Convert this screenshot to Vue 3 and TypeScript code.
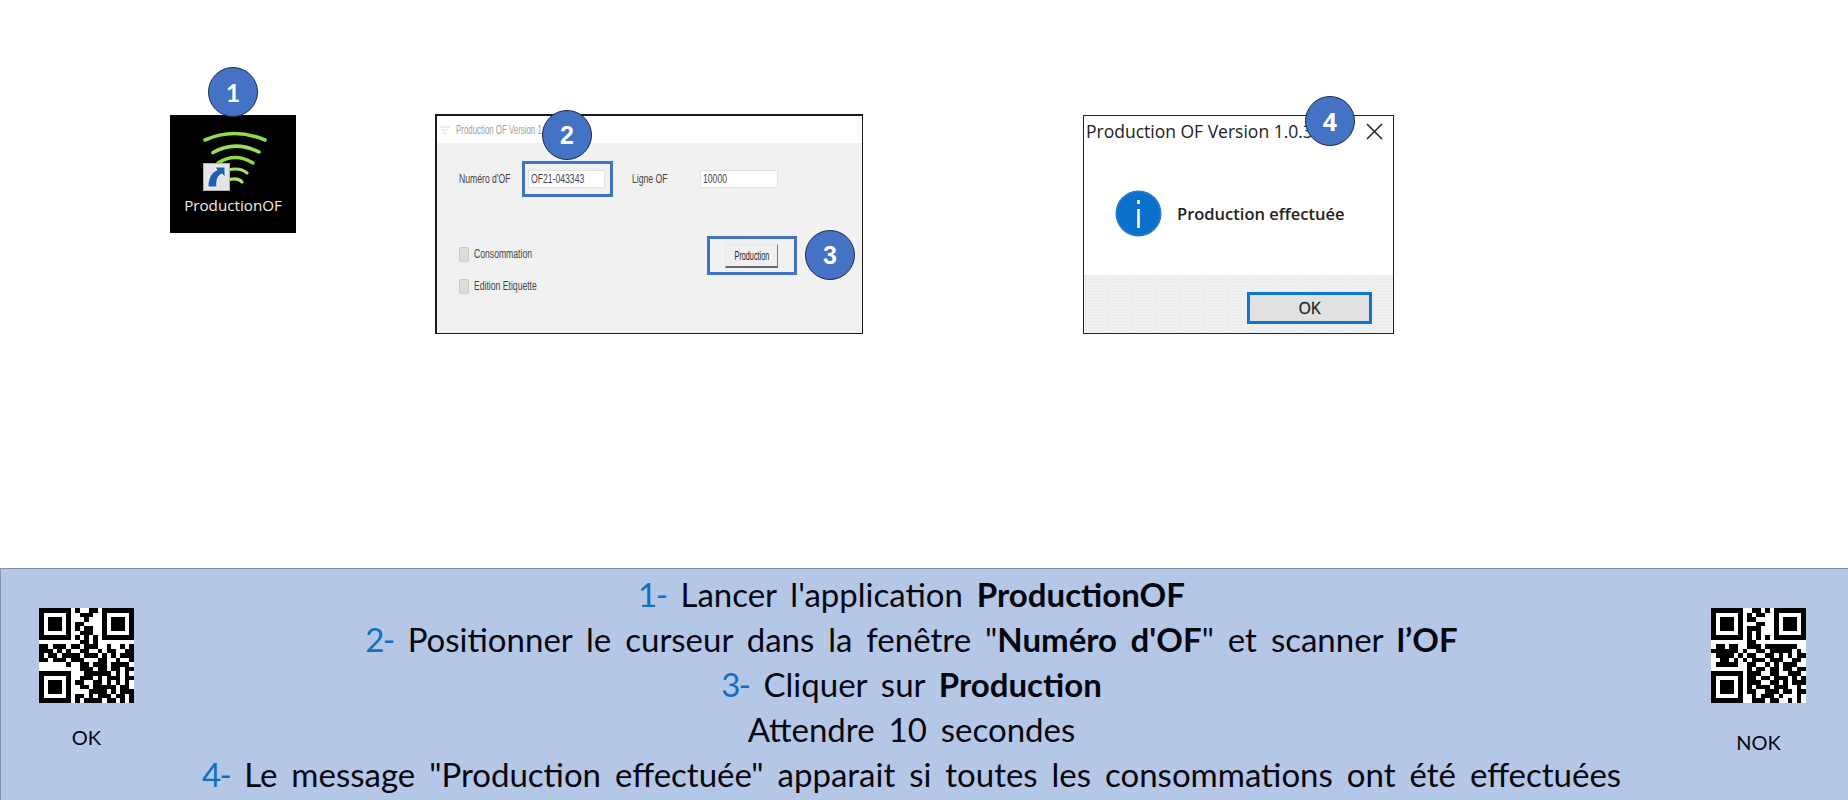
<template>
  <div class="slide">
    <section class="top">
      <div class="shortcut">
        <span class="badge badge-1">1</span>
        <svg class="shortcut-icon" width="126" height="80" viewBox="0 0 126 80" fill="none">
          <path d="M35 25Q64 12 95 25" stroke="#92da4e" stroke-width="3.6" stroke-linecap="round"/>
          <path d="M43 37.5Q65 25 89 37" stroke="#9ade58" stroke-width="3.6" stroke-linecap="round"/>
          <path d="M48 48Q65 37 83 48" stroke="#8ed84a" stroke-width="3.4" stroke-linecap="round"/>
          <path d="M58 55Q70 52 77 58" stroke="#a4e268" stroke-width="3.2" stroke-linecap="round"/>
          <path d="M58 65Q68 62 72 67" stroke="#a4e268" stroke-width="3.2" stroke-linecap="round"/>
          <rect x="33.5" y="48.5" width="26" height="27" fill="#e4e4e4" stroke="#b0b0b0"/>
          <path d="M38 72C38 62 42 57 47 55L45 52L55 52L55 62L52 59C48 60 46 65 47 72Z" fill="#1d5fb0" stroke="#fff" stroke-width="0.8"/>
        </svg>
        <span class="shortcut-label">ProductionOF</span>
      </div>

      <div class="form-window">
        <span class="badge badge-2">2</span>
        <span class="badge badge-3">3</span>
        <span class="highlight highlight-field"></span>
        <span class="highlight highlight-button"></span>
        <div class="form-title">
          <svg width="9" height="10" viewBox="0 0 9 10" fill="none" stroke="#a5d884" stroke-width="1" stroke-dasharray="1.5 1">
            <path d="M0 2H9M1 5H8M2 8H7"/>
          </svg>
          <span class="squeeze title-text">Production OF Version 1.0</span>
        </div>
        <div class="form-body">
          <div class="form-row">
            <label class="label-of"><span class="squeeze">Numéro d'OF</span></label>
            <span class="field field-of"><span class="squeeze">OF21-043343</span></span>
            <label class="label-line"><span class="squeeze">Ligne OF</span></label>
            <span class="field field-line"><span class="squeeze">10000</span></span>
          </div>
          <div class="form-lower">
            <div class="checks">
              <div class="check" v-for="c in checks" :key="c"><i></i><span class="squeeze">{{ c }}</span></div>
            </div>
            <button class="btn-prod"><span class="squeeze btn-text">Production</span></button>
          </div>
        </div>
      </div>

      <div class="msg-window">
        <span class="badge badge-4">4</span>
        <div class="msg-title">
          <span>Production OF Version 1.0.3</span>
          <svg width="17" height="17" viewBox="0 0 17 17" stroke="#222" stroke-width="1.5">
            <path d="M1 1L16 16M16 1L1 16"/>
          </svg>
        </div>
        <div class="msg-body">
          <svg width="47" height="47" viewBox="0 0 47 47">
            <circle cx="23.5" cy="23.5" r="23" fill="#0b6cc4"/>
            <circle cx="23.5" cy="23.5" r="22" fill="#0a70cc" stroke="#2f86d4" stroke-width="1"/>
            <rect x="22.2" y="19" width="2.6" height="19" fill="#fff"/>
            <rect x="22.2" y="10" width="2.6" height="4" fill="#fff"/>
          </svg>
          <span>Production effectuée</span>
        </div>
        <div class="msg-footer">
          <button class="btn-ok">OK</button>
        </div>
      </div>
    </section>

    <section class="legend">
      <div class="qr-col qr-left">
        <svg class="qr" width="95" height="95" viewBox="0 0 21 21" shape-rendering="crispEdges">
          <rect width="21" height="21" fill="#fff"/>
          <path :d="toPath(qrOk)" fill="#000"/>
        </svg>
        <span class="qr-label label-ok">OK</span>
      </div>

      <div class="steps">
        <p><b class="num">1-</b> Lancer l'application <strong>ProductionOF</strong></p>
        <p><b class="num">2-</b> Positionner le curseur dans la fenêtre "<strong>Numéro d'OF</strong>" et scanner <strong>l’OF</strong></p>
        <p><b class="num">3-</b> Cliquer sur <strong>Production</strong></p>
        <p>Attendre 10 secondes</p>
        <p><b class="num">4-</b> Le message "Production effectuée" apparait si toutes les consommations ont été effectuées</p>
      </div>

      <div class="qr-col qr-right">
        <svg class="qr" width="95" height="95" viewBox="0 0 21 21" shape-rendering="crispEdges">
          <rect width="21" height="21" fill="#fff"/>
          <path :d="toPath(qrNok)" fill="#000"/>
        </svg>
        <span class="qr-label label-nok">NOK</span>
      </div>
    </section>
  </div>
</template>

<script setup lang="ts">
const checks = ['Consommation', 'Edition Etiquette']

const qrOk = [
  '111111101001101111111',
  '100000100111001000001',
  '101110100010001011101',
  '101110101100001011101',
  '101110101011001011101',
  '100000100111001000001',
  '111111101010101111111',
  '000000000110100000000',
  '110111011011100100101',
  '111010100110010110011',
  '101101111011101010111',
  '110111011100011001001',
  '000000100110111011110',
  '000000000111011011011',
  '111111100011111101010',
  '100000100111010111011',
  '101110101100110101010',
  '101110100110111110110',
  '101110100001111010111',
  '100000101101011101101',
  '111111101011110110101',
]

const qrNok = [
  '111111100110101111111',
  '100000101011001000001',
  '101110101100001011101',
  '101110100011001011101',
  '101110101110001011101',
  '100000101010001000001',
  '111111101010101111111',
  '000000001100000000000',
  '011011001110111111100',
  '111111010011011111010',
  '011110101100110101011',
  '001101010111011100110',
  '011111001100101011100',
  '000000001011011011011',
  '111111101110011001110',
  '100000101101101110101',
  '101110101110011010111',
  '101110101011101110010',
  '101110101100111011011',
  '100000100101110100010',
  '111111100111011001010',
]

// une cellule noire = un carré de 1x1 dans le viewBox
function toPath(rows: string[]): string {
  let d = ''
  rows.forEach((row, y) => {
    for (let x = 0; x < row.length; x++) {
      if (row[x] === '1') d += `M${x} ${y}h1v1h-1z`
    }
  })
  return d
}
</script>

<style scoped>
.slide {
  display: flex;
  flex-direction: column;
  width: 1848px;
  height: 800px;
  overflow: hidden;
  background: #fff;
  font-family: Lato, "Liberation Sans", sans-serif;
}
.top {
  display: flex;
  align-items: flex-start;
  height: 568px;
  padding: 115px 0 0 170px;
  box-sizing: border-box;
}

.badge {
  position: absolute;
  z-index: 2;
  display: flex;
  align-items: center;
  justify-content: center;
  width: 50px;
  height: 50px;
  box-sizing: border-box;
  border: 1.5px solid #1c2b4a;
  border-radius: 50%;
  background: #4472c4;
  color: #fff;
  font-size: 25px;
  font-weight: 700;
}

/* icône du bureau */
.shortcut {
  position: relative;
  display: flex;
  flex-direction: column;
  align-items: center;
  width: 126px;
  height: 118px;
  background: #000;
}
.shortcut-icon {
  display: block;
}
.shortcut-label {
  color: #f2ece4;
  font-family: "Open Sans", sans-serif;
  font-size: 15.2px;
  line-height: 20px;
}
.badge-1 {
  left: 38px;
  top: -48px;
}

/* fenêtre de saisie : la capture d'origine est écrasée en largeur */
.form-window {
  position: relative;
  width: 428px;
  height: 220px;
  margin: -1px 0 0 139px;
  box-sizing: border-box;
  border: solid #1a1a1a;
  border-width: 2px 1px 1px 2px;
  background: #f1f1f1;
  font-family: "Liberation Sans", sans-serif;
  font-size: 12.5px;
  color: #444;
}
.squeeze {
  display: inline-block;
  flex: none;
  transform: scaleX(0.69);
  transform-origin: left center;
  white-space: nowrap;
}
.form-title {
  display: flex;
  align-items: center;
  gap: 6px;
  height: 27px;
  padding-left: 4px;
  background: #fff;
  color: #a0a0a0;
}
.title-text {
  transform: scaleX(0.63);
}
.form-body {
  padding: 27px 0 0 22px;
}
.form-row {
  display: flex;
  align-items: center;
  height: 18px;
}
.label-of {
  width: 69px;
  flex: none;
}
.label-line {
  width: 68px;
  flex: none;
  margin-left: 27px;
}
.field {
  display: flex;
  align-items: center;
  flex: none;
  height: 18px;
  padding-left: 2px;
  box-sizing: border-box;
  border: 1px solid #e2e2e2;
  background: #fff;
}
.field-of {
  width: 77px;
}
.field-line {
  width: 78px;
}
.form-lower {
  display: flex;
  justify-content: space-between;
  width: 319px;
  margin-top: 56px;
}
.checks {
  display: flex;
  flex-direction: column;
  gap: 18px;
  padding-top: 3px;
}
.check {
  display: flex;
  align-items: center;
  gap: 5px;
  height: 14px;
}
.check i {
  width: 8px;
  height: 13px;
  border: 1px solid #c8c8c8;
  border-radius: 2px;
  background: #dcdcdc;
}
.btn-prod {
  display: flex;
  align-items: center;
  justify-content: center;
  width: 53px;
  height: 24px;
  padding: 0;
  border: solid #e8e8e8;
  border-width: 1px 1px 2px 1px;
  border-right-color: #777;
  border-bottom-color: #666;
  background: #f0f0f0;
  color: #222;
  font-family: "Liberation Sans", sans-serif;
  font-size: 12.5px;
}
.btn-text {
  transform: scaleX(0.58);
  transform-origin: center;
}
.highlight {
  position: absolute;
  box-sizing: border-box;
  border: 3px solid #4472c4;
}
.highlight-field {
  left: 85px;
  top: 45px;
  width: 91px;
  height: 36px;
}
.highlight-button {
  left: 270px;
  top: 120px;
  width: 90px;
  height: 39px;
}
.badge-2 {
  left: 105px;
  top: -6px;
}
.badge-3 {
  left: 368px;
  top: 114px;
}

/* message de confirmation */
.msg-window {
  position: relative;
  display: flex;
  flex-direction: column;
  width: 311px;
  height: 219px;
  margin-left: 220px;
  box-sizing: border-box;
  border: 1px solid #222;
  background: #fff;
  font-family: "Open Sans", sans-serif;
  color: #222;
}
.msg-title {
  display: flex;
  align-items: center;
  justify-content: space-between;
  height: 30px;
  padding: 0 10px 0 2px;
  font-size: 17.5px;
  white-space: nowrap;
}
.badge-4 {
  left: 221px;
  top: -20px;
}
.msg-body {
  display: flex;
  align-items: center;
  gap: 15px;
  height: 129px;
  padding: 6px 0 0 31px;
  box-sizing: border-box;
  font-size: 16.5px;
  font-weight: 600;
}
.msg-footer {
  flex: 1;
  display: flex;
  justify-content: flex-end;
  padding: 17px 21px 0 0;
  background-color: #f0f0f0;
  background-image: radial-gradient(#e2e2e2 0.7px, transparent 0.8px);
  background-size: 3px 3px;
}
.btn-ok {
  width: 125px;
  height: 32px;
  box-sizing: border-box;
  border: 3px solid #0a78d0;
  background: #e1e1e1;
  color: #222;
  font-family: "Open Sans", sans-serif;
  font-size: 16px;
  font-weight: 400;
  -webkit-text-stroke: 0.3px #222;
}

/* bandeau du bas */
.legend {
  flex: 1;
  display: flex;
  box-sizing: border-box;
  border-top: 1px solid #8593a8;
  border-left: 1px solid #8593a8;
  background: #b4c7e7;
  color: #06060f;
}
.qr-col {
  display: flex;
  flex-direction: column;
  padding-top: 39px;
}
.qr-left {
  width: 95px;
  padding-left: 38px;
}
.qr-right {
  width: 95px;
  padding: 39px 42px 0 22px;
}
.qr {
  display: block;
  flex-shrink: 0;
}
.qr-label {
  font-size: 20px;
  line-height: 24px;
  text-align: center;
}
.label-ok {
  margin-top: 22px;
}
.label-nok {
  margin-top: 27px;
}
.steps {
  flex: 1;
  padding-top: 3px;
  font-size: 33px;
  word-spacing: 5.5px;
  line-height: 45px;
  text-align: center;
}
.steps p {
  margin: 0;
  white-space: nowrap;
}
.num {
  color: #1170c0;
  font-weight: 400;
  letter-spacing: -1.5px;
}
.steps strong {
  font-weight: 700;
}
</style>
